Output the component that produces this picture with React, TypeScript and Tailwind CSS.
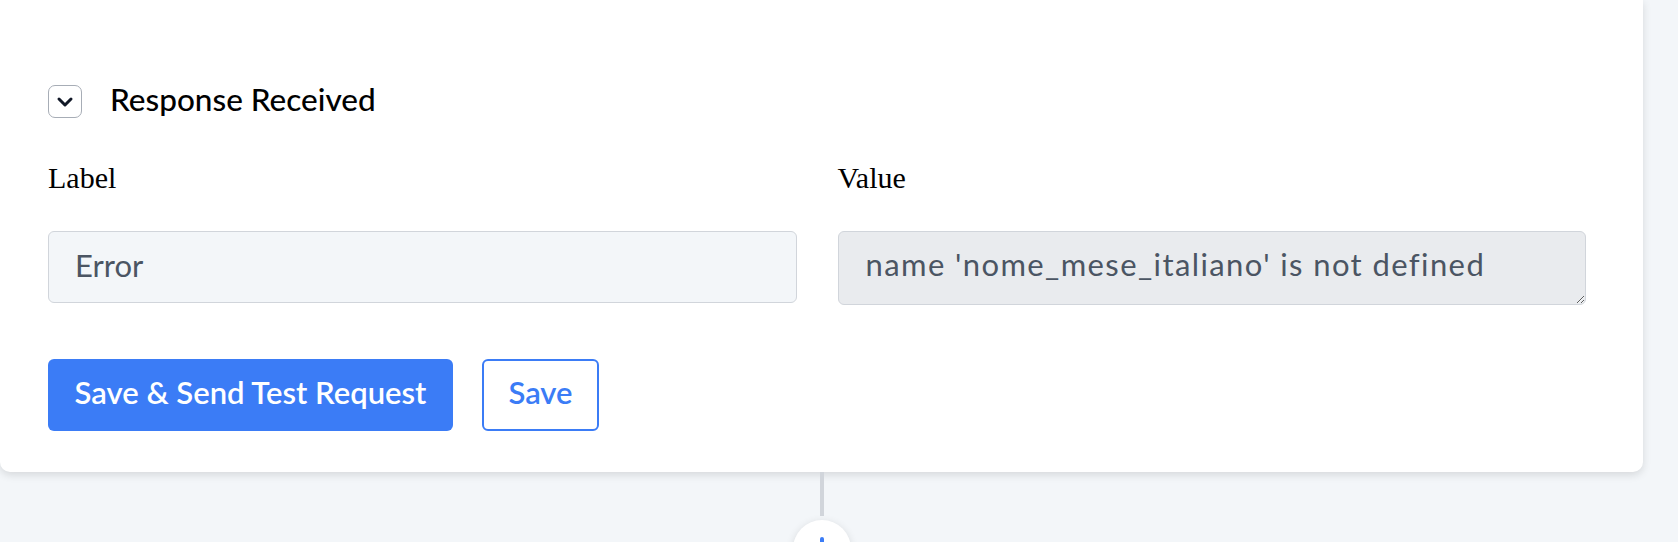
import { ChevronDown } from 'lucide-react';

export default function App() {
  return (
    <div className="h-[542px] w-full overflow-hidden bg-[#f3f6f9] font-['Lato',sans-serif]">
      <div className="flex w-[1643px] flex-col items-center">
        {/* Card */}
        <div className="w-full rounded-b-[10px] bg-white pt-[85px] pb-[41px] pl-[48px] pr-[57px] shadow-[0_3px_8px_rgba(0,0,0,0.12)]">
          <div className="flex items-center gap-[28px]">
            <button className="flex h-[33px] w-[34px] items-center justify-center rounded-[7px] border-[1.5px] border-[#a7adb6] text-[#111827]">
              <ChevronDown className="h-[24px] w-[24px]" strokeWidth={3} />
            </button>
            <span className="-mt-[5px] text-[31.5px] leading-[33px] font-medium text-black">Response Received</span>
          </div>

          <div className="mt-[42px] grid grid-cols-2 gap-x-[41px]">
            <div className="flex flex-col">
              <label className="font-['Liberation_Serif',serif] text-[30px] leading-[36px] text-black">Label</label>
              <input
                readOnly
                value="Error"
                className="mt-[35px] h-[72px] rounded-[6px] border-[1.5px] border-[#d1d5db] bg-[#f3f6f9] px-[26px] pb-[4px] text-[31px] text-[#4b5563] outline-none"
              />
            </div>
            <div className="flex flex-col">
              <label className="font-['Liberation_Serif',serif] text-[30px] leading-[36px] text-black">Value</label>
              <textarea
                readOnly
                value="name 'nome_mese_italiano' is not defined"
                className="mt-[35px] h-[74px] resize-y rounded-[6px] border-[1.5px] border-[#d1d5db] bg-[#e9ebee] px-[27px] pt-[13px] text-[31px] leading-[38px] tracking-[1.4px] text-[#4b5563] outline-none"
              />
            </div>
          </div>

          <div className="mt-[54px] flex gap-[29px]">
            <button className="h-[72px] w-[405px] rounded-[6px] bg-[#3b7cf6] pb-[5px] text-[31px] font-semibold text-white">
              Save &amp; Send Test Request
            </button>
            <button className="h-[72px] w-[117px] rounded-[6px] border-2 border-[#3b7cf6] bg-white pb-[5px] text-[31px] font-semibold text-[#3b7cf6]">
              Save
            </button>
          </div>
        </div>

        {/* Connector */}
        <div className="h-[44px] w-[4px] bg-[#d1d5db]" />
        <div className="mt-[4px] flex h-[58px] w-[58px] items-start justify-center rounded-full bg-white pt-[17px] shadow-[0_2px_8px_rgba(0,0,0,0.12)]">
          <div className="h-[24px] w-[4px] rounded-full bg-[#3b7cf6]" />
        </div>
      </div>
    </div>
  );
}
